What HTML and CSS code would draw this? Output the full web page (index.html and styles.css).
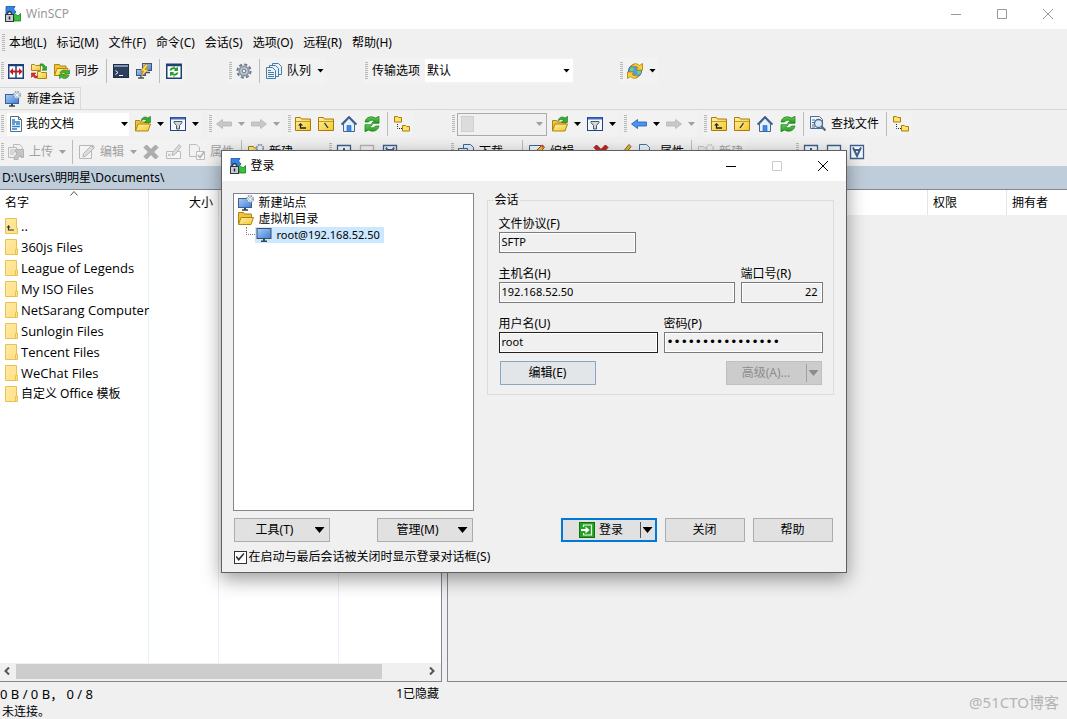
FILE: index.html
```html
<!DOCTYPE html>
<html lang="zh-CN">
<head>
<meta charset="utf-8">
<title>WinSCP</title>
<link rel="stylesheet" href="styles.css">
</head>
<body>
<svg class="sprite" aria-hidden="true">
  <defs>
    <linearGradient id="gFolder" x1="0" y1="0" x2="1" y2="1"><stop offset="0" stop-color="#fff0a8"/><stop offset="1" stop-color="#f3c92c"/></linearGradient>
    <linearGradient id="gWin" x1="0" y1="0" x2="1" y2="1"><stop offset="0" stop-color="#ffeaa5"/><stop offset="1" stop-color="#ffdf81"/></linearGradient>
    <linearGradient id="gScreen" x1="0" y1="0" x2="1" y2="1"><stop offset="0" stop-color="#a9cdf7"/><stop offset="1" stop-color="#3f7fd8"/></linearGradient>
    <linearGradient id="gGreen" x1="0" y1="0" x2="0" y2="1"><stop offset="0" stop-color="#5fd24c"/><stop offset="1" stop-color="#1f9a1c"/></linearGradient>
  </defs>
  <symbol id="app" viewBox="0 0 16 16">
    <path d="M1 .5h9L8.500 3l2.500 3-3 3-3-3.500L1 8z" fill="#2f86ea" stroke="#1d4f9d" stroke-width=".8"/>
    <path d="M15.500 15H8l2-2-2.500-3.500 2-2 3.500 2.500 2.500-2.500z" fill="#37c23a" stroke="#167d1b" stroke-width=".8"/>
    <path d="M2.500 9V7.500a2 2 0 0 1 4 0V9" fill="none" stroke="#3c3f46" stroke-width="1.400"/>
    <rect x=".5" y="8.500" width="8" height="7" fill="#c9ced6" stroke="#30343c"/><path d="M4.500 10.500v3" stroke="#22252b" stroke-width="1.500"/>
  </symbol>
  <symbol id="compare" viewBox="0 0 16 16">
    <rect x=".75" y="1.750" width="14.500" height="13.500" fill="#fff" stroke="#1f3f77" stroke-width="1.500"/><path d="M1 2.500h14M8 2v13" stroke="#1f3f77" stroke-width="1.500"/>
    <path d="M1.500 8.500 5 5v2.500h6V5l3.500 3.500L11 12V9.500H5V12z" fill="#c81a1a"/>
  </symbol>
  <symbol id="syncbrowse" viewBox="0 0 16 16">
    <path d="M.5 1.500h3l1 1h5v5h-9z" fill="url(#gFolder)" stroke="#b08410"/>
    <path d="M6.500 8.500h3l1 1h5v6h-9z" fill="url(#gFolder)" stroke="#b08410"/>
    <path d="M9 1c3-.7 4.500.5 5 2.500h1.700v3.800H11L12.300 5C11.500 3 10.500 2.300 9 2.300z" fill="#2eae2e" stroke="#177517" stroke-width=".5"/>
    <path d="M6 15c-2 .3-3.500-.5-4-2L.3 14.500V10H5l-1.500 1.500c.5 1 1.500 1.700 2.500 1.700z" fill="#e03030" stroke="#a01212" stroke-width=".5"/>
  </symbol>
  <symbol id="sync" viewBox="0 0 16 16">
    <path d="M.5 12.500v-11h5l1 1.500h5.500v3" fill="#f0c43c" stroke="#b08410"/><path d="M.5 12.500 3 5.500h11l-2 7z" fill="url(#gFolder)" stroke="#b08410"/>
    <path d="M6 10c1-3 5-4 7.500-1.500L15.500 7v4h-5l1.200-1C10.500 9 9 9 8 10.500z" fill="#40b93c" stroke="#1a7b18" stroke-width=".6"/>
    <path d="M5.500 11.500h5L9.300 13c1.200 1 2.700.7 3.700-.8h2c-1 3.300-5 4.300-7.500 2.100L5.500 15.500z" fill="#40b93c" stroke="#1a7b18" stroke-width=".6"/>
  </symbol>
  <symbol id="console" viewBox="0 0 16 16">
    <rect x=".5" y="1.500" width="15" height="13" fill="#2c3f5e" stroke="#1c2c49"/><path d="M1 3h14" stroke="#8293b2" stroke-width="2"/>
    <path d="m2.500 7.500 2.500 2-2.500 2M6 12.500h4" fill="none" stroke="#fff"/>
  </symbol>
  <symbol id="putty" viewBox="0 0 16 16">
    <rect x="6.500" y=".5" width="9" height="7" fill="url(#gScreen)" stroke="#44546e"/><path d="M9 9.500h5" stroke="#44546e" stroke-width="1.500"/>
    <rect x=".5" y="6.500" width="9" height="6" fill="url(#gScreen)" stroke="#44546e"/><path d="M2 15h6M5 13v2" stroke="#44546e" stroke-width="1.500"/>
    <path d="M10 1 4.500 8h3L5 14l7.500-7.500H9L12 2z" fill="#ffe04a" stroke="#c48510" stroke-width=".8"/>
  </symbol>
  <symbol id="refreshbox" viewBox="0 0 16 16">
    <rect x=".75" y="1.250" width="14.500" height="14" fill="#fff" stroke="#1f3f77" stroke-width="1.500"/><path d="M1 2.500h14" stroke="#1f3f77" stroke-width="1.500"/><path d="M8 3v2m0 8v2" stroke="#6b83ad"/>
    <path d="M3.500 7.500C4 4.500 7.500 3.500 10 5L12 3.700V8H8l1-1.300C7.500 6 6 6.300 5.500 7.500zM12.500 9.500c-.5 3-4 4-6.500 2.500L4 13.300V9h4l-1 1.300c1.500.7 3 .4 3.500-.8z" fill="#25a12b"/>
  </symbol>
  <symbol id="gear" viewBox="0 0 16 16">
    <circle cx="8" cy="8" r="6.600" fill="none" stroke="#6f7b89" stroke-width="2" stroke-dasharray="3.100 2.080"/>
    <circle cx="8" cy="8" r="4.700" fill="#c3ccd6" stroke="#8b97a5" stroke-width="1.800"/><circle cx="8" cy="8" r="1.900" fill="#f0f0f0" stroke="#66717e"/>
  </symbol>
  <symbol id="queue" viewBox="0 0 16 16">
    <g fill="#e8f2fb" stroke="#4b7aa5"><path d="M6.500.5h6l3 3v8h-9z"/><path d="M3.500 2.500h6l3 3v8h-9z"/><path d="M.5 4.500h6l3 3v8h-9z"/></g><path d="M2 7.500h3M2 9.500h6M2 11.500h6M2 13.500h6" stroke="#4b7aa5"/>
  </symbol>
  <symbol id="globe" viewBox="0 0 16 16">
    <circle cx="8" cy="8" r="6.500" fill="#4f9bee" stroke="#2b6c9d"/><path d="M3 6c1-2 3-2 4 0L6 8 3 8zM10 8l4-1v3l-3 2z" fill="#76d06c"/>
    <path d="M4 3.500C6 0 10 0 12.500 2.500L15.500.5V7H9l2-2.500C9 3 6 3 4 3.500z" fill="#fcd22f" stroke="#b27a0b" stroke-width=".8"/>
    <path d="M12 12.500c-2 3.500-6 3.500-8.500 1L.5 15.500V9H7l-2 2.500c2 1.500 5 1.500 7 1z" fill="#fcd22f" stroke="#b27a0b" stroke-width=".8"/>
  </symbol>
  <symbol id="monitor" viewBox="0 0 16 16">
    <rect x="1" y="1.500" width="14" height="10" fill="url(#gScreen)" stroke="#3d4f69"/><path d="M7 12h2v1.500h2V15H5v-1.500h2z" fill="#3d4654"/>
  </symbol>
  <symbol id="newsession" viewBox="0 0 16 16">
    <rect x=".5" y="3.500" width="13" height="9" fill="url(#gScreen)" stroke="#3d5f94"/><path d="M6 13h2v1.200h2v1.500H4v-1.500h2z" fill="#39414f"/>
    <circle cx="12" cy="4" r="3.300" fill="#eef3f8" stroke="#7f96ae" stroke-width="1.500" stroke-dasharray="1.600 1"/><circle cx="12" cy="4" r="1.500" fill="#fff" stroke="#8ea2b8" stroke-width=".6"/>
  </symbol>
  <symbol id="doc" viewBox="0 0 16 16">
    <path d="M2.500.5h8l3 3v12h-11z" fill="#fff" stroke="#5c6b7a"/><path d="M10.500.5v3h3" fill="none" stroke="#5c6b7a"/><path d="M4 4h3M4 6h8M4 8h3M8 8h4M4 10.500h8M4 13h5" stroke="#2a7fd0" stroke-width="1.300"/>
  </symbol>
  <symbol id="openfolder" viewBox="0 0 16 16">
    <path d="M.5 15V4.500h4l1 1.500h8v3" fill="#f0c43c" stroke="#b08410"/><path d="m.5 15 2.500-7h12.500l-2.500 7z" fill="url(#gFolder)" stroke="#b08410"/>
    <path d="M6 5C7 1 10 0 13 2l2.500-1.700v6.200H9.500L11.500 4C9.500 3 7.500 3.500 6 5z" fill="#37ad34" stroke="#187a18" stroke-width=".6"/>
  </symbol>
  <symbol id="filter" viewBox="0 0 16 16">
    <rect x=".5" y="1.500" width="15" height="13" fill="#f5f9ff" stroke="#1e4487"/><path d="M1 2.500h14" stroke="#3a6dbb" stroke-width="2"/><path d="M4 5.500h8v1L9.500 9.500V13h-3V9.500L4 6.500z" fill="#d3d6da" stroke="#4d5560"/>
  </symbol>
  <symbol id="back" viewBox="0 0 16 16"><path d="m.5 8 6-4.500V6h9v4h-9v2.500z" fill="#4b93ef" stroke="#1f5fb5" stroke-width=".8"/></symbol>
  <symbol id="forward" viewBox="0 0 16 16"><path d="m15.500 8-6-4.500V6h-9v4h9v2.500z" fill="#8a8a8a" stroke="#606060" stroke-width=".8"/></symbol>
  <symbol id="parent" viewBox="0 0 16 16">
    <path d="M.5 1.500h5l1 1.500h9v11.500H.5z" fill="url(#gFolder)" stroke="#a97c08"/><path d="M1 5.500h14" stroke="#c99a1c"/><path d="M5.500 8v4H11" fill="none" stroke="#222" stroke-width="1.300"/><path d="M3 9.500 5.500 7 8 9.500z" fill="#222"/>
  </symbol>
  <symbol id="rootl" viewBox="0 0 16 16"><path d="M.5 1.500h5l1 1.500h9v11.500H.5z" fill="url(#gFolder)" stroke="#a97c08"/><path d="M1 5.500h14" stroke="#c99a1c"/><path d="m6.500 7 3.500 5" stroke="#222" stroke-width="1.200"/></symbol>
  <symbol id="rootr" viewBox="0 0 16 16"><path d="M.5 1.500h5l1 1.500h9v11.500H.5z" fill="url(#gFolder)" stroke="#a97c08"/><path d="M1 5.500h14" stroke="#c99a1c"/><path d="m9.500 7-3.500 5" stroke="#222" stroke-width="1.200"/></symbol>
  <symbol id="home" viewBox="0 0 16 16">
    <path d="M2.500 8v7.500h11V8L8 2z" fill="#e6f1fc" stroke="#48648c"/><path d="M.5 8.500 8 1l7.500 7.500" fill="none" stroke="#3b5b88" stroke-width="1.800"/><path d="M6 9.500h4v6H6z" fill="#3b8af0" stroke="#245fae" stroke-width=".6"/>
  </symbol>
  <symbol id="refresh" viewBox="0 0 16 16">
    <path d="M1 6C2 1 7-.5 11.500 2l3.500-1.700v7H7.500L10.500 5C8 3.500 5.500 4 4.500 6z" fill="url(#gGreen)" stroke="#167517" stroke-width=".7"/>
    <path d="M15 10c-1 5-6 6.500-10.500 4L1 15.700v-7h7.500L5.500 11c2.500 1.500 5 1 6-1z" fill="url(#gGreen)" stroke="#167517" stroke-width=".7"/>
  </symbol>
  <symbol id="tree" viewBox="0 0 16 16">
    <path d="M.5.5h3l1 1h3V6h-7zM8.500 9.500h3l1 1h3V15h-7z" fill="#ffe26a" stroke="#a97c08"/><path d="M3.500 8v4.500H8" fill="none" stroke="#222" stroke-dasharray="1 1"/>
  </symbol>
  <symbol id="find" viewBox="0 0 16 16">
    <path d="M.5.5h9l3 3v9H.5z" fill="#eff5fb" stroke="#4a6c93"/><path d="M2 4h3M2 6.500h2M2 9h2M2 11h3" stroke="#4a6c93"/><circle cx="8.500" cy="7.500" r="4" fill="#d5e9f8" stroke="#52687f" stroke-width="1.300"/><path d="m11.500 10.500 4 4" stroke="#52687f" stroke-width="2.200"/>
  </symbol>
  <symbol id="upload" viewBox="0 0 16 16">
    <path d="M5.500.5h6l3 3v9h-9z" fill="#e8f0f8" stroke="#4a6c93"/><path d="M.5 3.500h8v10h-8z" fill="#e8f0f8" stroke="#4a6c93"/><path d="M2 6h5M2 8h5M2 10h4" stroke="#4a6c93"/><path d="M6 15.500c0-3 1-5 4-5.500V8H7.500V5.500h8v8H13V11c-2.500.5-3 2-3 4.500z" fill="#889" stroke="#557"/>
  </symbol>
  <symbol id="download" viewBox="0 0 16 16">
    <path d="M5.500.5h7l3 3v9h-10z" fill="#e3effb" stroke="#3b6694"/><path d="M.5 4.500h9v9h-9z" fill="#e3effb" stroke="#3b6694"/><path d="M2 8h6" stroke="#3b6694"/>
  </symbol>
  <symbol id="edit" viewBox="0 0 16 16">
    <path d="M.5 1.500h12v13H.5z" fill="#f3f8fd" stroke="#3f6493"/><path d="M13 1 15.500 3.500 7 12l-3 1 .5-3.500z" fill="#f4bb34" stroke="#815b28"/><path d="M12 2 13.500.5l2 2L14 4z" fill="#dc4141"/>
  </symbol>
  <symbol id="delete" viewBox="0 0 16 16"><path d="M1 3.500 3.500 1 8 5.500 12.500 1 15 3.500 10.500 8l4.500 4.500-2.500 2.500L8 10.500 3.500 15 1 12.500 5.500 8z" fill="#c92424" stroke="#8e1515"/></symbol>
  <symbol id="rename" viewBox="0 0 16 16">
    <path d="M.5 7.500h14v7H.5z" fill="#fff" stroke="#5a6c80"/><path d="m2 9.500 2.500 3M4.500 9.500 2 12.500" stroke="#5a6c80"/><path d="m13 .5 2 2-6 8-3 1 .5-3z" fill="#f4bb34" stroke="#815b28"/>
  </symbol>
  <symbol id="props" viewBox="0 0 16 16">
    <path d="M.5.5h7l3 3v9H.5z" fill="#e9f3fc" stroke="#4b729e"/><path d="M7.500 7.500h8v8h-8z" fill="#fff" stroke="#4b729e"/><path d="m9 11 2 2.500L15 8" fill="none" stroke="#555" stroke-width="1.500"/>
  </symbol>
  <symbol id="newfolder" viewBox="0 0 16 16">
    <path d="M.5 2.500h5l1 1.500h7v10H.5z" fill="url(#gFolder)" stroke="#a97c08"/><circle cx="12" cy="4" r="3.300" fill="#eef3f8" stroke="#6f88a5" stroke-width="1.500" stroke-dasharray="1.600 1"/>
  </symbol>
  <symbol id="plusbox" viewBox="0 0 16 16"><path d="M1.500 1.500h13v13h-13z" fill="#f6f9fc" stroke="#3f5f8c" stroke-width="1.300"/><path d="M8 4v8M4 8h8" stroke="#3f5f8c" stroke-width="2"/></symbol>
  <symbol id="minusbox" viewBox="0 0 16 16"><path d="M1.500 1.500h13v13h-13z" fill="#f6f9fc" stroke="#3f5f8c" stroke-width="1.300"/><path d="M4 8h8" stroke="#3f5f8c" stroke-width="2"/></symbol>
  <symbol id="vbox" viewBox="0 0 16 16"><path d="M1.500 1.500h13v13h-13z" fill="#f6f9fc" stroke="#3f5f8c" stroke-width="1.300"/><path d="m4 3.500 4 8.500 4-8.500M5.500 6h5" fill="none" stroke="#3f5f8c" stroke-width="2"/></symbol>
  <symbol id="dirclosed" viewBox="0 0 13 16"><path d="M.5.5h11v9.500h1v5.500H.5z" fill="url(#gWin)" stroke="#e8c350"/><path d="M10.500 15v-4.500h1" fill="none" stroke="#e8c350"/></symbol>
  <symbol id="dirup" viewBox="0 0 13 16"><path d="M.5.5h11v9.500h1v5.500H.5z" fill="url(#gWin)" stroke="#e8c350"/><path d="M3.500 8.500v3.500H9" fill="none" stroke="#333" stroke-width="1.200"/><path d="m1.500 9.500 2-2.500 2 2.500z" fill="#333"/></symbol>
  <symbol id="diropen" viewBox="0 0 16 16"><path d="M.5 13V1.500h5l1 1.500h7v4" fill="#f0c43c" stroke="#b08410"/><path d="m.5 13.500 2.500-7h12.500L13 13.500z" fill="url(#gFolder)" stroke="#b08410"/></symbol>
  <symbol id="login" viewBox="0 0 16 16"><rect x=".5" y=".5" width="15" height="15" fill="#23a31f" stroke="#127010"/><path d="M4.500 5V3h8v10h-8v-2" fill="none" stroke="#fff" stroke-width="1.200"/><path d="M2 7h4.500V4.500l4 3.500-4 3.500V9H2z" fill="#fff"/></symbol>
</svg>

<header class="titlebar">
  <svg class="icon"><use href="#app"/></svg>
  <h1 class="titlebar-text">WinSCP</h1>
  <div class="window-controls">
    <button class="window-button" aria-label="最小化"><svg viewBox="0 0 12 12"><path d="M1 6.500h10"/></svg></button>
    <button class="window-button" aria-label="最大化"><svg viewBox="0 0 12 12"><path d="M1.500 1.500h9v9h-9z"/></svg></button>
    <button class="window-button" aria-label="关闭窗口"><svg viewBox="0 0 12 12"><path d="m1 1 10 10M11 1 1 11"/></svg></button>
  </div>
</header>

<nav class="menubar">
  <span class="grip"></span>
  <button class="menu">本地(L)</button><button class="menu">标记(M)</button><button class="menu">文件(F)</button><button class="menu">命令(C)</button><button class="menu">会话(S)</button><button class="menu">选项(O)</button><button class="menu">远程(R)</button><button class="menu">帮助(H)</button>
</nav>

<div class="toolbar-row toolbar-main">
  <div class="toolbar">
    <span class="grip"></span>
    <button class="tool" aria-label="比较目录"><svg class="icon"><use href="#compare"/></svg></button>
    <button class="tool" aria-label="同步浏览"><svg class="icon"><use href="#syncbrowse"/></svg></button>
    <button class="tool"><svg class="icon"><use href="#sync"/></svg>同步</button>
    <span class="sep"></span>
    <button class="tool" aria-label="终端"><svg class="icon"><use href="#console"/></svg></button>
    <button class="tool" aria-label="PuTTY"><svg class="icon"><use href="#putty"/></svg></button>
    <span class="sep"></span>
    <button class="tool" aria-label="刷新"><svg class="icon"><use href="#refreshbox"/></svg></button>
  </div>
  <div class="toolbar">
    <span class="grip"></span>
    <button class="tool" aria-label="设置"><svg class="icon"><use href="#gear"/></svg></button>
    <span class="sep"></span>
    <button class="tool"><svg class="icon"><use href="#queue"/></svg>队列<i class="caret"></i></button>
  </div>
  <div class="toolbar">
    <span class="grip"></span>
    <label class="transfer-label" for="transfer">传输选项</label>
    <span class="combo combo-transfer"><select id="transfer"><option>默认</option></select><i class="caret"></i></span>
  </div>
  <div class="toolbar">
    <span class="grip"></span>
    <button class="tool" aria-label="保持更新"><svg class="icon"><use href="#globe"/></svg><i class="caret"></i></button>
  </div>
</div>

<div class="session-tabs">
  <button class="session-tab"><svg class="icon"><use href="#newsession"/></svg>新建会话</button>
</div>

<div class="toolbar-row toolbar-nav">
  <div class="toolbar">
    <span class="grip"></span>
    <span class="combo combo-drive"><svg class="icon"><use href="#doc"/></svg><select aria-label="本地驱动器"><option>我的文档</option></select><i class="caret"></i></span>
    <button class="tool" aria-label="打开目录"><svg class="icon"><use href="#openfolder"/></svg><i class="caret"></i></button>
    <button class="tool" aria-label="过滤"><svg class="icon"><use href="#filter"/></svg><i class="caret"></i></button>
  </div>
  <div class="toolbar">
    <span class="grip"></span>
    <button class="tool off" aria-label="后退" disabled><svg class="icon"><use href="#back"/></svg><i class="caret"></i></button>
    <button class="tool off" aria-label="前进" disabled><svg class="icon"><use href="#forward"/></svg><i class="caret"></i></button>
  </div>
  <div class="toolbar">
    <span class="grip"></span>
    <button class="tool" aria-label="上级目录"><svg class="icon"><use href="#parent"/></svg></button>
    <button class="tool" aria-label="根目录"><svg class="icon"><use href="#rootl"/></svg></button>
    <button class="tool" aria-label="主目录"><svg class="icon"><use href="#home"/></svg></button>
    <button class="tool" aria-label="刷新本地"><svg class="icon"><use href="#refresh"/></svg></button>
    <span class="sep"></span>
    <button class="tool" aria-label="目录树"><svg class="icon"><use href="#tree"/></svg></button>
  </div>
  <div class="toolbar">
    <span class="grip"></span>
    <span class="combo combo-remote"><i class="blank-dir"></i><select aria-label="远程目录" disabled><option></option></select><i class="caret"></i></span>
    <button class="tool" aria-label="打开远程目录"><svg class="icon"><use href="#openfolder"/></svg><i class="caret"></i></button>
    <button class="tool" aria-label="过滤远程"><svg class="icon"><use href="#filter"/></svg><i class="caret"></i></button>
  </div>
  <div class="toolbar">
    <span class="grip"></span>
    <button class="tool" aria-label="远程后退"><svg class="icon"><use href="#back"/></svg><i class="caret"></i></button>
    <button class="tool off" aria-label="远程前进" disabled><svg class="icon"><use href="#forward"/></svg><i class="caret"></i></button>
  </div>
  <div class="toolbar">
    <span class="grip"></span>
    <button class="tool" aria-label="远程上级目录"><svg class="icon"><use href="#parent"/></svg></button>
    <button class="tool" aria-label="远程根目录"><svg class="icon"><use href="#rootr"/></svg></button>
    <button class="tool" aria-label="远程主目录"><svg class="icon"><use href="#home"/></svg></button>
    <button class="tool" aria-label="刷新远程"><svg class="icon"><use href="#refresh"/></svg></button>
    <span class="sep"></span>
    <button class="tool"><svg class="icon"><use href="#find"/></svg>查找文件</button>
    <span class="sep"></span>
    <button class="tool" aria-label="远程目录树"><svg class="icon"><use href="#tree"/></svg></button>
  </div>
</div>

<div class="toolbar-row toolbar-files">
  <div class="toolbar">
    <span class="grip"></span>
    <button class="tool off" disabled><svg class="icon"><use href="#upload"/></svg>上传<i class="caret"></i></button>
    <span class="sep"></span>
    <button class="tool off" disabled><svg class="icon"><use href="#edit"/></svg>编辑<i class="caret"></i></button>
    <button class="tool off" aria-label="删除" disabled><svg class="icon"><use href="#delete"/></svg></button>
    <button class="tool off" aria-label="重命名" disabled><svg class="icon"><use href="#rename"/></svg></button>
    <button class="tool off" disabled><svg class="icon"><use href="#props"/></svg>属性</button>
    <span class="sep"></span>
    <button class="tool"><svg class="icon"><use href="#newfolder"/></svg>新建</button>
  </div>
  <div class="toolbar">
    <span class="grip"></span>
    <button class="tool" aria-label="选择"><svg class="icon"><use href="#plusbox"/></svg></button>
    <button class="tool off" aria-label="取消选择" disabled><svg class="icon"><use href="#minusbox"/></svg></button>
    <button class="tool" aria-label="全选"><svg class="icon"><use href="#vbox"/></svg></button>
  </div>
  <div class="toolbar">
    <span class="grip"></span>
    <button class="tool"><svg class="icon"><use href="#download"/></svg>下载<i class="caret"></i></button>
    <span class="sep"></span>
    <button class="tool"><svg class="icon"><use href="#edit"/></svg>编辑<i class="caret"></i></button>
    <button class="tool" aria-label="删除远程"><svg class="icon"><use href="#delete"/></svg></button>
    <button class="tool" aria-label="重命名远程"><svg class="icon"><use href="#rename"/></svg></button>
    <button class="tool"><svg class="icon"><use href="#props"/></svg>属性</button>
    <span class="sep"></span>
    <button class="tool off" disabled><svg class="icon"><use href="#newfolder"/></svg>新建</button>
  </div>
  <div class="toolbar">
    <span class="grip"></span>
    <button class="tool" aria-label="远程选择"><svg class="icon"><use href="#plusbox"/></svg></button>
    <button class="tool" aria-label="远程取消选择"><svg class="icon"><use href="#minusbox"/></svg></button>
    <button class="tool" aria-label="远程全选"><svg class="icon"><use href="#vbox"/></svg></button>
  </div>
</div>

<main class="panes">
  <section class="pane pane-local">
    <div class="path">D:\Users\明明星\Documents\</div>
    <div class="list">
      <table class="files">
        <colgroup><col class="col-name"><col class="col-size"><col class="col-type"><col></colgroup>
        <thead><tr><th>名字<svg class="sort" viewBox="0 0 8 5"><path d="m.5 4.500 3.500-4 3.500 4"/></svg></th><th class="num">大小</th><th></th><th></th></tr></thead>
        <tbody>
          <tr><td><span class="entry"><svg class="dir"><use href="#dirup"/></svg>..</span></td><td></td><td></td><td></td></tr>
          <tr><td><span class="entry"><svg class="dir"><use href="#dirclosed"/></svg>360js Files</span></td><td></td><td></td><td></td></tr>
          <tr><td><span class="entry"><svg class="dir"><use href="#dirclosed"/></svg>League of Legends</span></td><td></td><td></td><td></td></tr>
          <tr><td><span class="entry"><svg class="dir"><use href="#dirclosed"/></svg>My ISO Files</span></td><td></td><td></td><td></td></tr>
          <tr><td><span class="entry"><svg class="dir"><use href="#dirclosed"/></svg>NetSarang Computer</span></td><td></td><td></td><td></td></tr>
          <tr><td><span class="entry"><svg class="dir"><use href="#dirclosed"/></svg>Sunlogin Files</span></td><td></td><td></td><td></td></tr>
          <tr><td><span class="entry"><svg class="dir"><use href="#dirclosed"/></svg>Tencent Files</span></td><td></td><td></td><td></td></tr>
          <tr><td><span class="entry"><svg class="dir"><use href="#dirclosed"/></svg>WeChat Files</span></td><td></td><td></td><td></td></tr>
          <tr><td><span class="entry entry-cjk"><svg class="dir"><use href="#dirclosed"/></svg>自定义 Office 模板</span></td><td></td><td></td><td></td></tr>
          <tr class="filler"><td></td><td></td><td></td><td></td></tr>
        </tbody>
      </table>
    </div>
    <div class="scrollbar">
      <svg class="scroll-arrow" viewBox="0 0 8 8"><path d="M6 .5 2.500 4 6 7.500"/></svg>
      <span class="track"><span class="thumb"></span></span>
      <svg class="scroll-arrow" viewBox="0 0 8 8"><path d="M2 .5 5.500 4 2 7.500"/></svg>
    </div>
  </section>
  <section class="pane pane-remote">
    <div class="path"></div>
    <table class="files files-remote">
      <colgroup><col><col class="col-rights"><col class="col-owner"></colgroup>
      <thead><tr><th></th><th>权限</th><th>拥有者</th></tr></thead>
    </table>
  </section>
</main>

<footer class="status">
  <div class="status-local"><span class="counts">0 B / 0 B， 0 / 8</span><span>1已隐藏</span></div>
  <div class="status-session">未连接。</div>
  <div class="watermark">@51CTO博客</div>
</footer>

<section class="dialog" role="dialog" aria-labelledby="login-title">
  <div class="dialog-title">
    <svg class="icon"><use href="#app"/></svg>
    <h2 class="dialog-heading" id="login-title">登录</h2>
    <div class="window-controls">
      <button class="window-button" aria-label="最小化对话框"><svg viewBox="0 0 12 12"><path d="M1 6.500h10"/></svg></button>
      <button class="window-button off" aria-label="最大化对话框" disabled><svg viewBox="0 0 12 12"><path d="M1.500 1.500h9v9h-9z"/></svg></button>
      <button class="window-button" aria-label="关闭对话框"><svg viewBox="0 0 12 12"><path d="m1 1 10 10M11 1 1 11"/></svg></button>
    </div>
  </div>
  <form class="dialog-body">
    <ul class="sites">
      <li class="site"><svg class="icon"><use href="#newsession"/></svg><span>新建站点</span></li>
      <li class="site"><svg class="icon"><use href="#diropen"/></svg><span>虚拟机目录</span></li>
      <li class="site site-child"><span class="branch"></span><span class="selected"><svg class="icon"><use href="#monitor"/></svg><span>root@192.168.52.50</span></span></li>
    </ul>
    <fieldset class="session">
      <legend>会话</legend>
      <div class="field-row row-protocol">
        <div class="field"><label for="protocol">文件协议(F)</label><input id="protocol" type="text" value="SFTP" readonly></div>
      </div>
      <div class="field-row row-host">
        <div class="field"><label for="host">主机名(H)</label><input id="host" type="text" value="192.168.52.50" readonly></div>
        <div class="field"><label for="port">端口号(R)</label><input id="port" class="num" type="text" value="22" readonly></div>
      </div>
      <div class="field-row row-user">
        <div class="field"><label for="user">用户名(U)</label><input id="user" class="hot" type="text" value="root" readonly></div>
        <div class="field"><label for="password">密码(P)</label><input id="password" class="secret" type="password" value="0123456789abcdef" readonly></div>
      </div>
      <div class="session-actions">
        <button type="button" class="button wide edit">编辑(E)</button>
        <div class="split wide split-off"><button type="button" disabled>高级(A)...</button><button type="button" class="drop" aria-label="高级选项" disabled><i class="triangle"></i></button></div>
      </div>
    </fieldset>
    <div class="actions-left">
      <button type="button" class="button wide menu-button"><span>工具(T)</span><i class="triangle"></i></button>
      <button type="button" class="button wide menu-button"><span>管理(M)</span><i class="triangle"></i></button>
    </div>
    <div class="actions-right">
      <div class="split wide split-default"><button type="submit"><svg class="icon"><use href="#login"/></svg>登录</button><button type="button" class="drop" aria-label="登录选项"><i class="triangle"></i></button></div>
      <button type="button" class="button">关闭</button>
      <button type="button" class="button">帮助</button>
    </div>
    <label class="show-again"><input type="checkbox" checked>在启动与最后会话被关闭时显示登录对话框(S)</label>
  </form>
</section>
</body>
</html>
```
FILE: styles.css
```css
* { box-sizing: border-box; }

body {
  margin: 0;
  height: 100vh;
  display: flex;
  flex-direction: column;
  overflow: hidden;
  position: relative;
  background: #f0f0f0;
  color: #000;
  font: 12px/16px "Noto Sans", "Noto Sans CJK SC", sans-serif;
}

button, input, select {
  font: inherit;
  color: inherit;
  margin: 0;
  padding: 0;
  border: 0;
  border-radius: 0;
  background: none;
}

h1, h2 { margin: 0; font: inherit; }
svg { flex: none; display: block; }

.sprite { position: absolute; width: 0; height: 0; }
.icon { width: 16px; height: 16px; }

/* Title bar */
.titlebar {
  flex: none;
  height: 29px;
  display: flex;
  align-items: center;
  gap: 5px;
  padding: 0 0 2px 5px;
  background: #fff;
  color: #999;
}
.window-controls { display: flex; margin-left: auto; }
.window-button { width: 46px; height: 26px; display: grid; place-items: center; }
.window-button svg { width: 12px; height: 12px; fill: none; stroke: currentColor; }
.titlebar .window-controls { margin-right: -4px; }

/* Menu and toolbars */
.menubar {
  flex: none;
  height: 28px;
  display: flex;
  align-items: center;
  gap: 10px;
  padding-left: 2px;
}
.menubar .grip { margin-right: -6px; }
.menu { white-space: nowrap; }

.grip {
  flex: none;
  width: 3px;
  height: 18px;
  background: repeating-linear-gradient(#b8b8b8 0 1px, #f0f0f0 1px 2px);
}

.toolbar-row { flex: none; height: 28px; display: grid; align-items: center; }
.toolbar-main { height: 27px; grid-template-columns: 228px 136px 255px auto; }
.toolbar-nav { grid-template-columns: 208px 79px 164px 172px 80px auto; }
.toolbar-files { grid-template-columns: 328px 122px 345px auto; }

.toolbar {
  height: 26px;
  justify-self: start;
  display: flex;
  align-items: center;
  padding-left: 1px;
  background: #f2f2f2;
}
.sep { flex: none; width: 1px; height: 24px; margin: 0 2px 0 4px; background: #bcbcbc; }

.tool {
  flex: none;
  display: flex;
  align-items: center;
  gap: 5px;
  height: 24px;
  padding: 0 3px 0 4px;
  white-space: nowrap;
}
.tool.off { color: #a0a0a0; }
.tool.off .icon { filter: grayscale(1); opacity: .4; }
.caret {
  flex: none;
  width: 7px;
  height: 4px;
  background: currentColor;
  clip-path: polygon(0 0, 100% 0, 50% 100%);
}
.tool .caret { margin: 0 -1px 0 1px; }

.transfer-label { margin: 0 5px 0 4px; white-space: nowrap; }
.combo { display: flex; align-items: center; height: 23px; background: #fff; }
.combo select { flex: 1; min-width: 0; appearance: none; outline: 0; opacity: 1; }
.combo-transfer { width: 148px; padding: 0 3px 0 2px; }
.combo-drive { width: 122px; margin: 0 2px 0 3px; padding: 0 1px 0 1px; gap: 2px; }
.combo-remote { width: 90px; margin: 0 1px 0 2px; padding: 0 3px; border: 1px solid #acacac; background: #f0f0f0; color: #a0a0a0; }
.blank-dir { width: 13px; height: 16px; background: #dcdcdc; border: 1px solid #d0d0d0; }

/* Session tabs */
.session-tabs { flex: none; height: 23px; margin-top: 3px; border-bottom: 1px solid #d9d9d9; display: flex; }
.session-tab {
  display: flex;
  align-items: center;
  gap: 6px;
  padding: 0 5px;
  border: solid #d9d9d9;
  border-width: 1px 1px 0 0;
}

/* File panes */
.panes {
  flex: 1;
  min-height: 0;
  display: grid;
  grid-template-columns: 442fr 620fr;
  gap: 5px;
}
.pane { min-width: 0; min-height: 0; display: flex; flex-direction: column; border-bottom: 1px solid #828790; }
.pane-local { border-right: 1px solid #828790; background: #fff; }
.pane-remote { border-left: 1px solid #828790; }
.path {
  flex: none;
  height: 24px;
  padding: 4px 2px;
  border-bottom: 1px solid #828790;
  background: #bfcddb;
}
.list { flex: 1; min-height: 0; }
.files { width: 100%; border-spacing: 0; table-layout: fixed; }
.list .files { height: 100%; }
.files th {
  height: 25px;
  position: relative;
  padding: 0 5px;
  font-weight: 400;
  text-align: left;
  background: #fff;
  border-right: 1px solid #e5e5e5;
}
.files .num { text-align: right; }
.sort { position: absolute; top: 1px; left: 70px; width: 8px; height: 5px; fill: none; stroke: #555; }
.files td { height: 21px; padding: 0 0 0 5px; border-right: 1px solid #e5f1fb; white-space: nowrap; }
.files th:last-child, .files td:last-child { border-right: 0; }
.files .filler td { height: auto; }
.col-name { width: 149px; }
.col-size { width: 70px; }
.col-type { width: 120px; }
.col-rights { width: 79px; }
.col-owner { width: 60px; }
.entry { display: flex; align-items: center; gap: 3px; font-family: "Open Sans", "Noto Sans CJK SC", sans-serif; font-size: 13px; }
.entry-cjk { font-family: inherit; font-size: 12px; }
.dir { width: 13px; height: 16px; }

.scrollbar { flex: none; height: 18px; display: flex; align-items: center; padding: 0 5px 2px 3px; background: #f0f0f0; }
.scroll-arrow { width: 8px; height: 8px; fill: none; stroke: #555; stroke-width: 2; }
.track { flex: 1; height: 15px; margin: 0 5px; }
.thumb { display: block; width: 90%; height: 100%; background: #cdcdcd; }

/* Status bars */
.status { flex: none; height: 37px; position: relative; display: grid; grid-template-columns: 442fr 625fr; grid-template-rows: 23px 14px; }
.status-local { display: flex; align-items: center; justify-content: space-between; padding-right: 3px; }
.counts { font-size: 13px; white-space: pre; }
.status-session { grid-row: 2; padding-left: 2px; line-height: 14px; }
.watermark { position: absolute; right: 8px; bottom: 9px; color: #b4b4b4; font-size: 15px; }

/* Login dialog */
.dialog {
  position: absolute;
  top: 150px;
  left: 0;
  right: 0;
  width: 626px;
  margin: 0 auto;
  border: 1px solid #606060;
  background: #f0f0f0;
  box-shadow: 0 6px 18px rgba(0, 0, 0, .4);
}
.dialog-title { height: 30px; display: flex; align-items: center; gap: 5px; padding: 0 0 1px 8px; background: #fff; }
.window-button.off { color: #ccc; }

.dialog-body {
  display: grid;
  grid-template-columns: 241px 1fr;
  grid-template-rows: 318px 24px 16px;
  gap: 7px 13px;
  padding: 12px 12px 7px 11px;
}
.sites { margin: 0; padding: 1px 4px; list-style: none; border: 1px solid #828790; background: #fff; }
.site { height: 16px; display: flex; align-items: center; gap: 5px; }
.site-child { padding-left: 8px; font-size: 11px; gap: 0; }
.branch { width: 9px; height: 8px; margin-bottom: 8px; border: dotted #808080; border-width: 0 0 1px 1px; }
.selected { display: flex; align-items: center; gap: 5px; height: 16px; padding: 0 4px 0 1px; background: #cce8ff; }

.session { align-self: start; min-width: 0; margin: 0; padding: 6px 10px 9px 11px; border: 1px solid #dcdcdc; }
.session legend { margin-left: -5px; padding: 0 1px; height: 14px; line-height: 14px; }
.field-row { display: grid; gap: 6px; margin-bottom: 10px; }
.row-protocol { grid-template-columns: 137px; }
.row-host { grid-template-columns: 1fr 82px; }
.row-user { grid-template-columns: 1fr 1fr; margin-bottom: 8px; }
.field { display: flex; flex-direction: column; min-width: 0; }
.field label { padding-top: 2px; height: 19px; line-height: 17px; white-space: nowrap; }
.field input {
  width: 100%;
  height: 21px;
  padding: 0 4px 2px 2px;
  border: 1px solid #7a7a7a;
  box-shadow: inset 0 0 0 1px #fff;
  font-size: 11px;
  outline: 0;
}
.field input.hot { border-color: #222; }
.field input.num { text-align: right; }
.field input.secret { font-family: "DejaVu Sans", sans-serif; font-size: 12px; }
.session-actions { display: flex; justify-content: space-between; padding: 0 1px; }

.button, .split { width: 80px; height: 24px; border: 1px solid #adadad; background: #e1e1e1; white-space: nowrap; }
.button.wide, .split.wide { width: 96px; }
.button.edit { border-color: #8ba6c1; background: #e3e6e9; }
.menu-button { display: flex; align-items: center; padding-right: 4px; }
.menu-button span { flex: 1; }
.triangle { flex: none; display: block; width: 10px; height: 6px; background: currentColor; clip-path: polygon(0 0, 100% 0, 50% 100%); }
.split { display: flex; align-items: stretch; }
.split button { flex: 1; display: flex; align-items: center; justify-content: center; gap: 4px; }
.split .drop { flex: none; width: 15px; margin: 2px 0; border-left: 1px solid #555; }
.split-default { border: 2px solid #0078d7; }
.split-off { border-color: #bfbfbf; background: #ccc; color: #8c8c8c; }
.split-off .drop { border-color: #a0a0a0; }

.actions-left { display: flex; justify-content: space-between; padding: 0 1px; }
.actions-right { display: flex; justify-content: flex-end; gap: 8px; padding-right: 1px; }
.show-again { grid-column: 1 / -1; display: flex; align-items: center; gap: 2px; padding-left: 1px; }
.show-again input {
  appearance: none;
  width: 13px;
  height: 13px;
  border: 1px solid #333;
  background: #fff;
  display: grid;
  place-items: center;
}
.show-again input:checked::before {
  content: "";
  width: 9px;
  height: 8px;
  background: #333;
  clip-path: polygon(0 50%, 14% 38%, 36% 66%, 88% 0, 100% 12%, 36% 100%);
}
```
